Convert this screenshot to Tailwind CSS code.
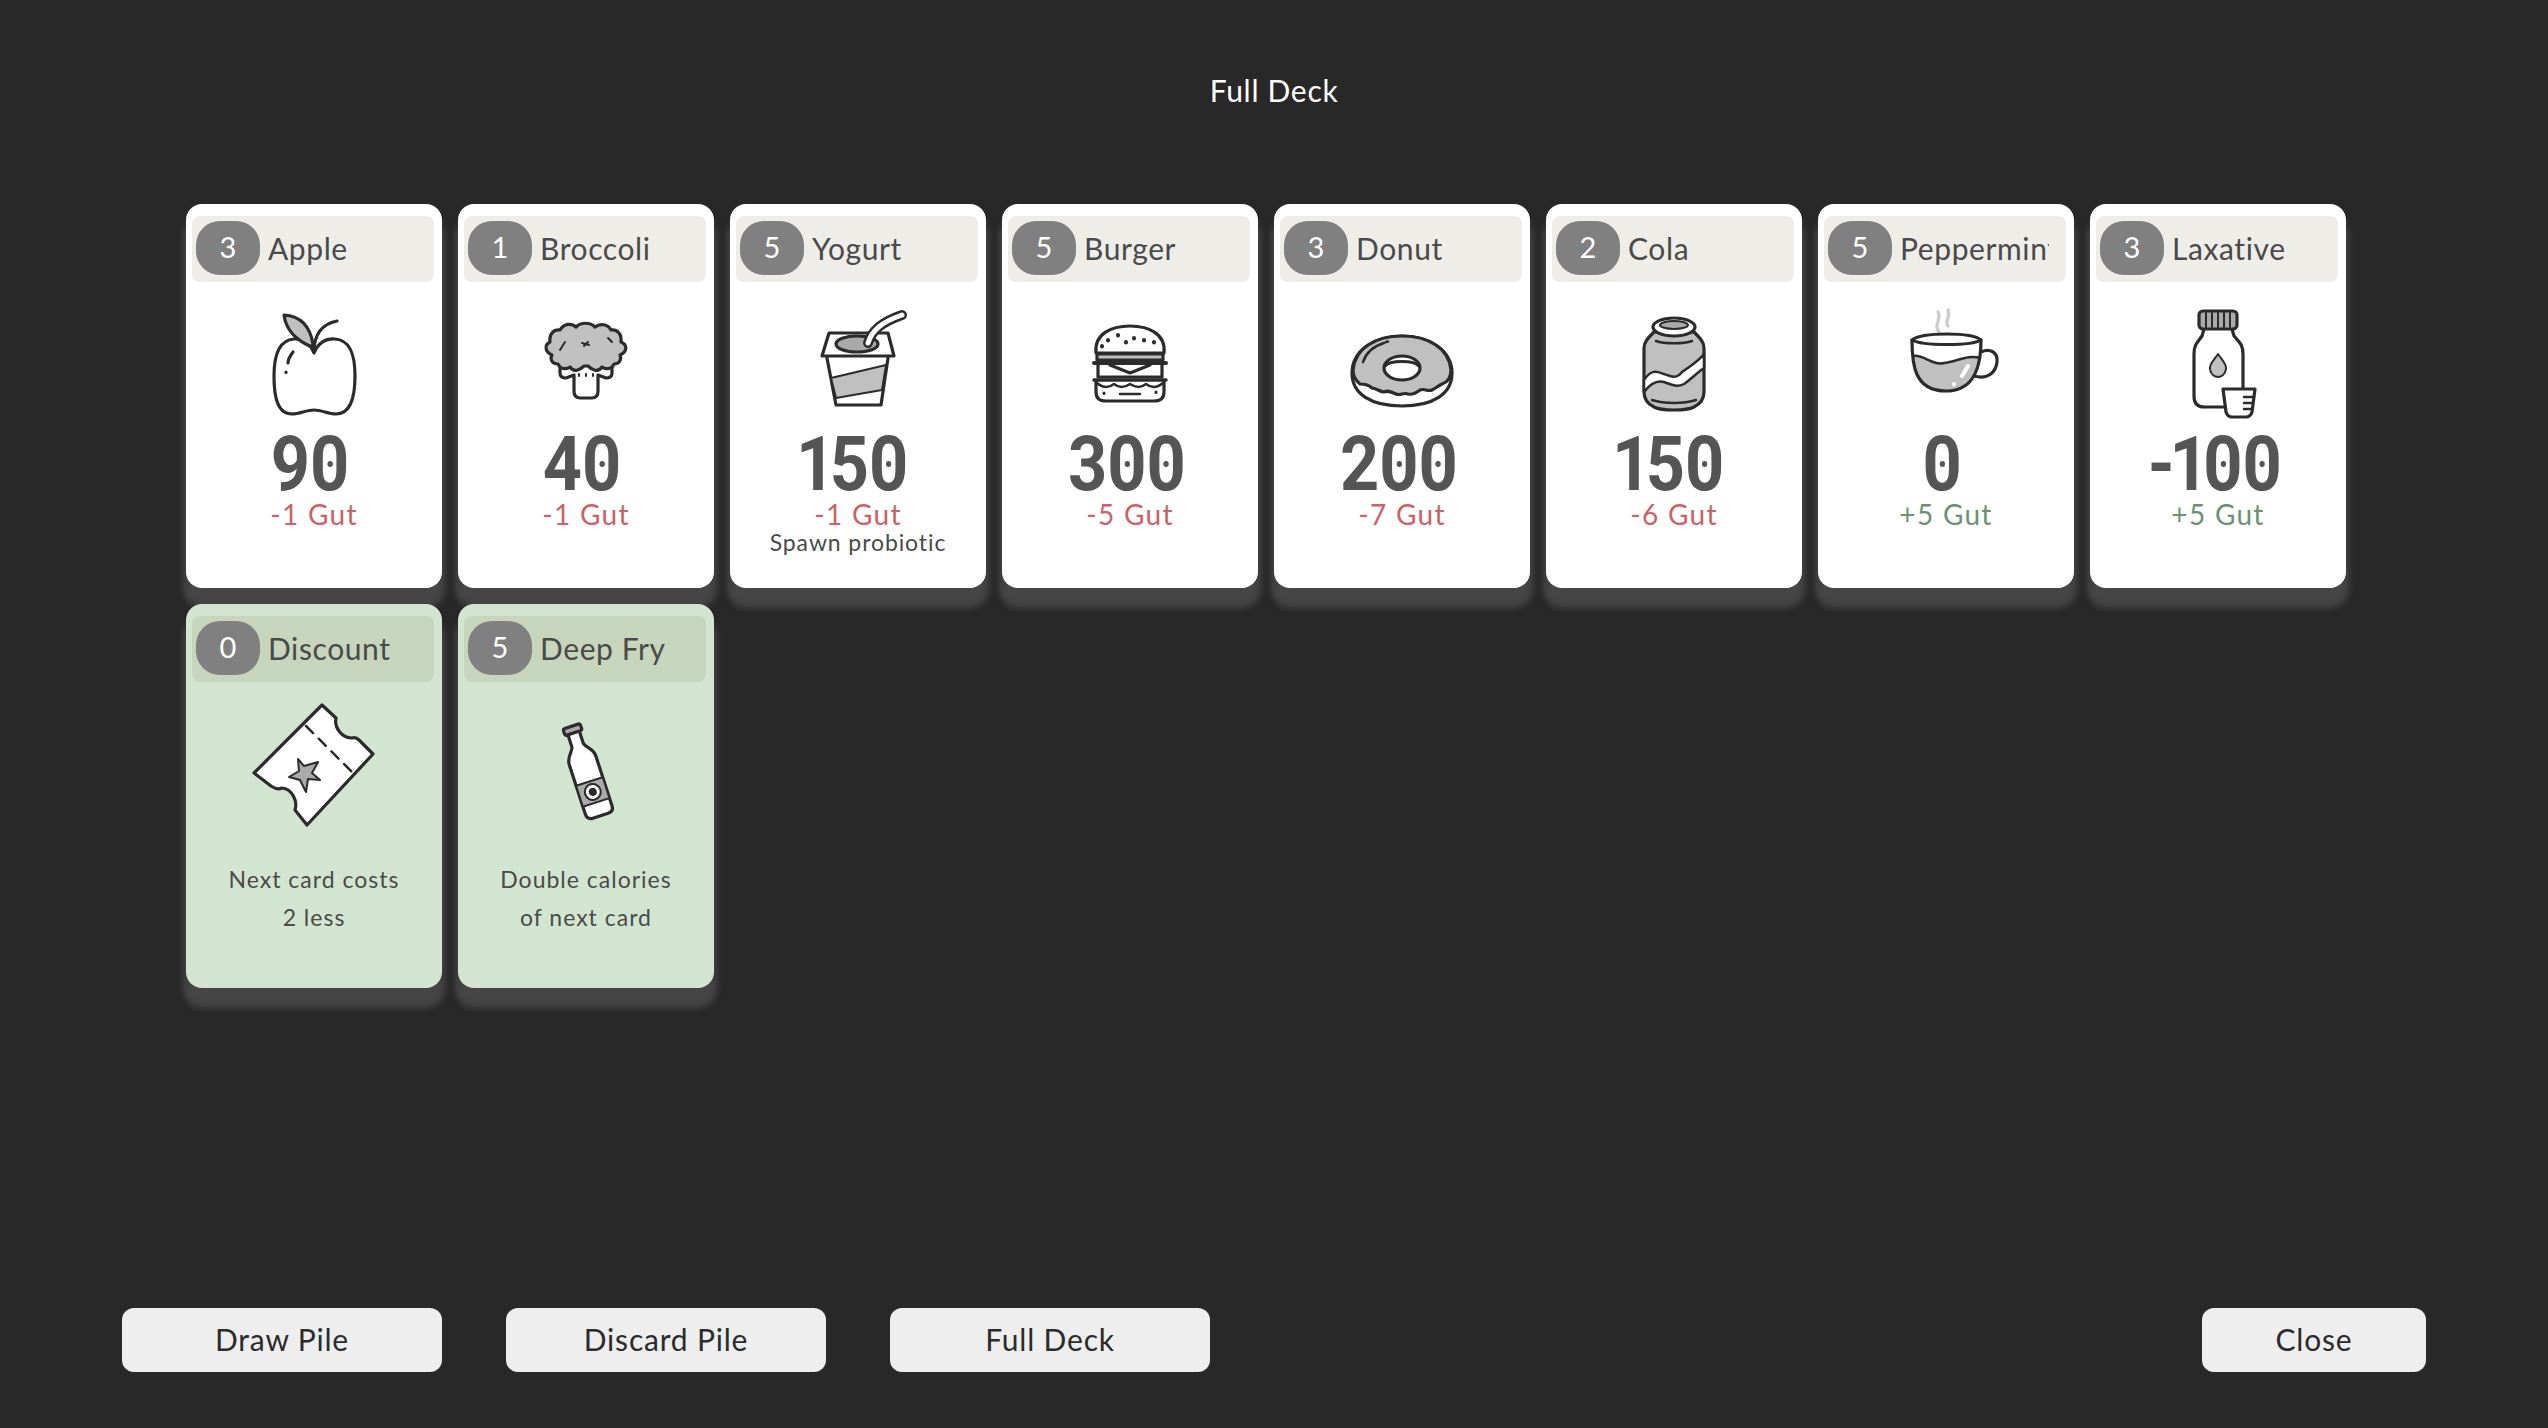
<!DOCTYPE html>
<html lang="en">
<head>
<meta charset="UTF-8" />
<title>Full Deck</title>
<script src="https://cdn.jsdelivr.net/npm/@tailwindcss/browser@4"></script>
</head>
<body class="bg-[#282828] font-['Lato',sans-serif]">
<div class="h-screen flex flex-col">

  <h1 class="h-[204px] pt-[71px] text-center text-[30px] leading-[38px] tracking-[0.7px] font-normal text-white">Full Deck</h1>

  <!-- card grid -->
  <main class="ml-[186px] grid grid-cols-[repeat(8,256px)] auto-rows-[384px] gap-4">

    <!-- Apple -->
    <div class="rounded-2xl bg-white pt-3 shadow-[0_17px_6px_3px_#454545] flex flex-col items-center">
      <div class="ml-1.5 mr-2 self-stretch h-[66px] rounded-lg bg-[#eeede8] flex items-center pl-1 pr-2.5 pb-0.5"><span class="w-16 h-[54px] shrink-0 rounded-3xl bg-[#808080] text-white text-[29px] flex items-center justify-center pb-0.5">3</span><span class="ml-2 text-[30px] tracking-[0.6px] text-[#4a4a4a] overflow-hidden whitespace-nowrap">Apple</span></div>
      <div class="mt-3.5 h-32 w-32"><svg viewBox="0 0 128 128" class="w-32 h-32" fill="none" stroke="#2b2b2b" stroke-width="3.2" stroke-linecap="round" stroke-linejoin="round">
        <path d="M64 57C60 47 52 42 44 43C30 44 24 58 24 80C24 100 27 118 42 118C50 118 56 114 64 114C72 114 78 118 86 118C101 118 105 100 105 80C105 58 100 44 85 43C76 42 68 47 64 57Z"/>
        <path fill="#c0c0c0" d="M62 51C50 46 36 36 34 19C50 20 60 30 63 48Z"/>
        <path d="M64 56C64 38 72 28 87 25M43 56C40 60 38 64 38 67M36 76V76.5"/>
      </svg></div>
      <div class="mt-[5px] pr-2 h-[69px] font-['Roboto',sans-serif] font-bold text-[76px] leading-[70px] text-[#555] scale-x-[0.9]">9<span class="relative inline-block">0<i class="absolute left-[19px] top-[32px] w-1.5 h-1.5 rounded-full bg-[#555]"></i></span></div>
      <div class="text-[28px] leading-[32px] tracking-[1.3px] text-[#cc6166]">-1 Gut</div>
    </div>

    <!-- Broccoli -->
    <div class="rounded-2xl bg-white pt-3 shadow-[0_17px_6px_3px_#454545] flex flex-col items-center">
      <div class="ml-1.5 mr-2 self-stretch h-[66px] rounded-lg bg-[#eeede8] flex items-center pl-1 pr-2.5 pb-0.5"><span class="w-16 h-[54px] shrink-0 rounded-3xl bg-[#808080] text-white text-[29px] flex items-center justify-center pb-0.5">1</span><span class="ml-2 text-[30px] tracking-[0.6px] text-[#4a4a4a] overflow-hidden whitespace-nowrap">Broccoli</span></div>
      <div class="mt-3.5 h-32 w-32"><svg viewBox="0 0 128 128" class="w-32 h-32" fill="none" stroke="#2b2b2b" stroke-width="3.2" stroke-linecap="round" stroke-linejoin="round">
        <path fill="#fff" d="M38 68V77Q38 82 44 82L52 79V95Q52 102 58 102H70Q76 102 76 95V79L84 82Q90 82 90 77V68Z"/>
        <path fill="#c0c0c0" d="M36 68C29 68 28 62 30 59C23 56 22 49 28 46C27 38 32 33 38 34C42 27 50 27 54 31C59 26 68 26 73 31C78 27 86 28 89 34C95 33 100 38 99 46C106 49 105 56 98 59C100 64 97 68 92 68C90 73 84 74 80 71C76 77 70 74 66 70H62C58 74 52 77 48 71C44 74 38 73 36 68Z"/>
        <path stroke-width="2" d="M38 54L43 46M60 47L67 49M62 50L66 46M86 42L90 46M57 78V80M64 78V80M71 78V80"/>
      </svg></div>
      <div class="mt-[5px] pr-2 h-[69px] font-['Roboto',sans-serif] font-bold text-[76px] leading-[70px] text-[#555] scale-x-[0.9]">4<span class="relative inline-block">0<i class="absolute left-[19px] top-[32px] w-1.5 h-1.5 rounded-full bg-[#555]"></i></span></div>
      <div class="text-[28px] leading-[32px] tracking-[1.3px] text-[#cc6166]">-1 Gut</div>
    </div>

    <!-- Yogurt -->
    <div class="rounded-2xl bg-white pt-3 shadow-[0_17px_6px_3px_#454545] flex flex-col items-center">
      <div class="ml-1.5 mr-2 self-stretch h-[66px] rounded-lg bg-[#eeede8] flex items-center pl-1 pr-2.5 pb-0.5"><span class="w-16 h-[54px] shrink-0 rounded-3xl bg-[#808080] text-white text-[29px] flex items-center justify-center pb-0.5">5</span><span class="ml-2 text-[30px] tracking-[0.6px] text-[#4a4a4a] overflow-hidden whitespace-nowrap">Yogurt</span></div>
      <div class="mt-3.5 h-32 w-32"><svg viewBox="0 0 128 128" class="w-32 h-32" fill="none" stroke="#2b2b2b" stroke-width="3.2" stroke-linecap="round" stroke-linejoin="round">
        <path d="M33 62L42 109H87L94 62"/>
        <path fill="#c0c0c0" stroke-width="2" d="M37 82L92 69L88 94L42 102Z"/>
        <path fill="#fff" d="M35 37H94L100 60H28Z"/>
        <ellipse cx="63" cy="48" rx="21" ry="8" fill="#aaa"/>
        <path stroke-width="10" d="M74 47C78 34 88 26 108 19"/>
        <path stroke="#fff" stroke-width="5" d="M74 47C78 34 88 26 108 19"/>
      </svg></div>
      <div class="mt-[5px] pr-2 h-[69px] font-['Roboto',sans-serif] font-bold text-[76px] leading-[70px] text-[#555] scale-x-[0.9]"><span class="inline-block -mx-1.5">1</span>5<span class="relative inline-block">0<i class="absolute left-[19px] top-[32px] w-1.5 h-1.5 rounded-full bg-[#555]"></i></span></div>
      <div class="text-[28px] leading-[32px] tracking-[1.3px] text-[#cc6166]">-1 Gut</div>
      <div class="text-[23px] leading-[24px] tracking-[0.9px] text-[#4a4a4a]">Spawn probiotic</div>
    </div>

    <!-- Burger -->
    <div class="rounded-2xl bg-white pt-3 shadow-[0_17px_6px_3px_#454545] flex flex-col items-center">
      <div class="ml-1.5 mr-2 self-stretch h-[66px] rounded-lg bg-[#eeede8] flex items-center pl-1 pr-2.5 pb-0.5"><span class="w-16 h-[54px] shrink-0 rounded-3xl bg-[#808080] text-white text-[29px] flex items-center justify-center pb-0.5">5</span><span class="ml-2 text-[30px] tracking-[0.6px] text-[#4a4a4a] overflow-hidden whitespace-nowrap">Burger</span></div>
      <div class="mt-3.5 h-32 w-32"><svg viewBox="0 0 128 128" class="w-32 h-32" fill="none" stroke="#2b2b2b" stroke-width="3.2" stroke-linecap="round" stroke-linejoin="round">
        <path d="M30 57C28 38 45 30 64 30C83 30 100 38 98 57Z"/>
        <path stroke-width="4" d="M42 44V44.5M52 39V39.5M60 46V46.5M68 42V42.5M78 44V44.5M88 46V46.5M36 50V50.5"/>
        <path fill="#c0c0c0" d="M31 58H97V64H31Z"/>
        <path stroke-width="4" d="M28 67H100"/>
        <path d="M32 69V81H96V69M44 69L64 77L84 69"/>
        <path stroke-width="3.5" d="M28 84H100"/>
        <path d="M30 85V96Q30 105 40 105H88Q98 105 98 96V85"/>
        <path stroke-width="2.5" d="M31 87C37 92 43 92 48 88C53 92 58 92 64 88C70 92 75 92 80 88C85 92 91 92 97 87M54 98H74"/>
        <path stroke-width="3" d="M38 97V97.5M90 96V96.5"/>
      </svg></div>
      <div class="mt-[5px] pr-2 h-[69px] font-['Roboto',sans-serif] font-bold text-[76px] leading-[70px] text-[#555] scale-x-[0.9]">3<span class="relative inline-block">0<i class="absolute left-[19px] top-[32px] w-1.5 h-1.5 rounded-full bg-[#555]"></i></span><span class="relative inline-block">0<i class="absolute left-[19px] top-[32px] w-1.5 h-1.5 rounded-full bg-[#555]"></i></span></div>
      <div class="text-[28px] leading-[32px] tracking-[1.3px] text-[#cc6166]">-5 Gut</div>
    </div>

    <!-- Donut -->
    <div class="rounded-2xl bg-white pt-3 shadow-[0_17px_6px_3px_#454545] flex flex-col items-center">
      <div class="ml-1.5 mr-2 self-stretch h-[66px] rounded-lg bg-[#eeede8] flex items-center pl-1 pr-2.5 pb-0.5"><span class="w-16 h-[54px] shrink-0 rounded-3xl bg-[#808080] text-white text-[29px] flex items-center justify-center pb-0.5">3</span><span class="ml-2 text-[30px] tracking-[0.6px] text-[#4a4a4a] overflow-hidden whitespace-nowrap">Donut</span></div>
      <div class="mt-3.5 h-32 w-32"><svg viewBox="0 0 128 128" class="w-32 h-32" fill="none" stroke="#2b2b2b" stroke-width="3.2" stroke-linecap="round" stroke-linejoin="round">
        <path d="M14 77C14 55 36 40 64 40C92 40 114 55 114 77C114 98 95 110 64 110C33 110 14 98 14 77Z"/>
        <path fill="#c0c0c0" d="M15 74C17 52 38 40 64 40C90 40 111 52 113 74C113 82 110 86 104 88C100 90 98 92 94 94C90 96 86 92 82 94C78 97 74 99 70 98C66 96 62 100 58 98C54 96 50 94 46 96C42 96 38 92 34 92C30 88 26 88 22 88C17 84 15 80 15 74Z"/>
        <ellipse cx="64" cy="72" rx="18" ry="12" fill="#fff"/>
        <path d="M47 70C52 64 76 64 81 70"/>
        <path stroke-width="2.5" d="M25 66C28 57 36 50 46 47M48 46L50 45.5"/>
      </svg></div>
      <div class="mt-[5px] pr-2 h-[69px] font-['Roboto',sans-serif] font-bold text-[76px] leading-[70px] text-[#555] scale-x-[0.9]">2<span class="relative inline-block">0<i class="absolute left-[19px] top-[32px] w-1.5 h-1.5 rounded-full bg-[#555]"></i></span><span class="relative inline-block">0<i class="absolute left-[19px] top-[32px] w-1.5 h-1.5 rounded-full bg-[#555]"></i></span></div>
      <div class="text-[28px] leading-[32px] tracking-[1.3px] text-[#cc6166]">-7 Gut</div>
    </div>

    <!-- Cola -->
    <div class="rounded-2xl bg-white pt-3 shadow-[0_17px_6px_3px_#454545] flex flex-col items-center">
      <div class="ml-1.5 mr-2 self-stretch h-[66px] rounded-lg bg-[#eeede8] flex items-center pl-1 pr-2.5 pb-0.5"><span class="w-16 h-[54px] shrink-0 rounded-3xl bg-[#808080] text-white text-[29px] flex items-center justify-center pb-0.5">2</span><span class="ml-2 text-[30px] tracking-[0.6px] text-[#4a4a4a] overflow-hidden whitespace-nowrap">Cola</span></div>
      <div class="mt-3.5 h-32 w-32"><svg viewBox="0 0 128 128" class="w-32 h-32" fill="none" stroke="#2b2b2b" stroke-width="3.2" stroke-linecap="round" stroke-linejoin="round">
        <path fill="#c0c0c0" d="M44 36C38 42 34 46 34 52V96C34 103 38 108 44 111C52 115 76 115 84 111C90 108 94 103 94 96V52C94 46 90 42 84 36Z"/>
        <path fill="#fff" stroke-width="2.5" d="M34 84C42 72 48 76 54 78C60 80 66 84 72 76C80 70 88 66 94 58V72C88 76 80 84 74 88C66 92 60 88 54 86C46 84 40 88 34 96Z"/>
        <ellipse cx="64" cy="31" rx="21" ry="9" fill="#fff"/>
        <ellipse cx="64" cy="29" rx="14" ry="4" fill="#aaa" stroke-width="2"/>
        <path stroke-width="2.5" d="M46 45C54 48 74 48 82 45M42 104C54 108 74 108 86 104"/>
      </svg></div>
      <div class="mt-[5px] pr-2 h-[69px] font-['Roboto',sans-serif] font-bold text-[76px] leading-[70px] text-[#555] scale-x-[0.9]"><span class="inline-block -mx-1.5">1</span>5<span class="relative inline-block">0<i class="absolute left-[19px] top-[32px] w-1.5 h-1.5 rounded-full bg-[#555]"></i></span></div>
      <div class="text-[28px] leading-[32px] tracking-[1.3px] text-[#cc6166]">-6 Gut</div>
    </div>

    <!-- Peppermint -->
    <div class="rounded-2xl bg-white pt-3 shadow-[0_17px_6px_3px_#454545] flex flex-col items-center">
      <div class="ml-1.5 mr-2 self-stretch h-[66px] rounded-lg bg-[#eeede8] flex items-center pl-1 pr-[17px] pb-0.5"><span class="w-16 h-[54px] shrink-0 rounded-3xl bg-[#808080] text-white text-[29px] flex items-center justify-center pb-0.5">5</span><span class="ml-2 text-[30px] tracking-[0.6px] text-[#4a4a4a] overflow-hidden whitespace-nowrap">Peppermint</span></div>
      <div class="mt-3.5 h-32 w-32"><svg viewBox="0 0 128 128" class="w-32 h-32" fill="none" stroke="#2b2b2b" stroke-width="3.2" stroke-linecap="round" stroke-linejoin="round">
        <path stroke="#ccc" d="M57 36C51 28 60 24 56 16M66 30C62 25 69 22 66 14"/>
        <path fill="#c0c0c0" stroke="none" d="M31 60C42 58 50 70 62 67C74 66 86 58 98 62C96 78 88 94 64 95C40 95 33 78 31 60Z"/>
        <path stroke="#fff" stroke-width="4" d="M80 80L86 70M72 88V88.5"/>
        <path d="M30 44C30 68 32 95 64 95C94 95 99 68 99 44"/>
        <path d="M30 44C40 36 90 36 99 44C90 50 40 50 30 44Z"/>
        <path stroke-width="2.5" d="M31 60C42 58 50 70 62 67C74 66 86 58 98 62"/>
        <path d="M99 56C108 52 116 56 115 66C114 76 106 84 92 80"/>
      </svg></div>
      <div class="mt-[5px] pr-2 h-[69px] font-['Roboto',sans-serif] font-bold text-[76px] leading-[70px] text-[#555] scale-x-[0.9]"><span class="relative inline-block">0<i class="absolute left-[19px] top-[32px] w-1.5 h-1.5 rounded-full bg-[#555]"></i></span></div>
      <div class="text-[28px] leading-[32px] tracking-[1.3px] text-[#6f9070]">+5 Gut</div>
    </div>

    <!-- Laxative -->
    <div class="rounded-2xl bg-white pt-3 shadow-[0_17px_6px_3px_#454545] flex flex-col items-center">
      <div class="ml-1.5 mr-2 self-stretch h-[66px] rounded-lg bg-[#eeede8] flex items-center pl-1 pr-2.5 pb-0.5"><span class="w-16 h-[54px] shrink-0 rounded-3xl bg-[#808080] text-white text-[29px] flex items-center justify-center pb-0.5">3</span><span class="ml-2 text-[30px] tracking-[0.6px] text-[#4a4a4a] overflow-hidden whitespace-nowrap">Laxative</span></div>
      <div class="mt-3.5 h-32 w-32"><svg viewBox="0 0 128 128" class="w-32 h-32" fill="none" stroke="#2b2b2b" stroke-width="3.2" stroke-linecap="round" stroke-linejoin="round">
        <path d="M50 33L48 40C44 46 40 48 40 58V100C40 108 44 111 50 111H72M78 33L80 40C85 46 89 48 89 58V92"/>
        <rect x="45" y="15" width="38" height="18" rx="4" fill="#aaa"/>
        <path stroke-width="2" d="M52 17V31M58 17V31M64 17V31M70 17V31M76 17V31"/>
        <path fill="#c0c0c0" stroke-width="2" d="M64 58C60 64 55 68 56 73C57 79 61 81 64 81C67 81 71 79 72 73C73 68 68 64 64 58Z"/>
        <path fill="#fff" d="M69 93H101L98 116C97 119 95 121 92 121H78C75 121 73 119 72 116Z"/>
        <path stroke-width="2.5" d="M90 101H99M90 107H98M90 113H97"/>
      </svg></div>
      <div class="mt-[5px] pr-2 h-[69px] font-['Roboto',sans-serif] font-bold text-[76px] leading-[70px] text-[#555] scale-x-[0.9]">-<span class="inline-block -mx-1.5">1</span><span class="relative inline-block">0<i class="absolute left-[19px] top-[32px] w-1.5 h-1.5 rounded-full bg-[#555]"></i></span><span class="relative inline-block">0<i class="absolute left-[19px] top-[32px] w-1.5 h-1.5 rounded-full bg-[#555]"></i></span></div>
      <div class="text-[28px] leading-[32px] tracking-[1.3px] text-[#6f9070]">+5 Gut</div>
    </div>

    <!-- Discount -->
    <div class="rounded-2xl bg-[#d2e5d0] pt-3 shadow-[0_17px_6px_3px_#454545] flex flex-col items-center">
      <div class="ml-1.5 mr-2 self-stretch h-[66px] rounded-lg bg-[#c6d5bb] flex items-center pl-1 pr-2.5 pb-0.5"><span class="w-16 h-[54px] shrink-0 rounded-3xl bg-[#808080] text-white text-[29px] flex items-center justify-center pb-0.5">0</span><span class="ml-2 text-[30px] tracking-[0.6px] text-[#4a4a4a] overflow-hidden whitespace-nowrap">Discount</span></div>
      <div class="mt-3.5 h-32 w-32"><svg viewBox="0 0 128 128" class="w-32 h-32 overflow-visible" fill="none" stroke="#2b2b2b" stroke-width="3.2" stroke-linecap="round" stroke-linejoin="round">
        <path fill="#fff" d="M72 9L86 22C84 32 92 42 102 42C105 41 107 42 109 44L123 58L57 129L45 114C48 105 42 93 32 92C28 94 24 92 21 90L4 77Z"/>
        <path stroke-width="2.5" stroke-dasharray="10 8" d="M56 30L102 76"/>
        <path fill="#aaa" stroke-width="2" d="M48 63L54 70L68 66L62 77L70 84L58 83L56 96L50 84L39 81L49 75Z"/>
      </svg></div>
      <div class="mt-9 text-center text-[23px] leading-[38px] tracking-[1px] text-[#4a4a4a]">Next card costs<br>2 less</div>
    </div>

    <!-- Deep Fry -->
    <div class="rounded-2xl bg-[#d2e5d0] pt-3 shadow-[0_17px_6px_3px_#454545] flex flex-col items-center">
      <div class="ml-1.5 mr-2 self-stretch h-[66px] rounded-lg bg-[#c6d5bb] flex items-center pl-1 pr-2.5 pb-0.5"><span class="w-16 h-[54px] shrink-0 rounded-3xl bg-[#808080] text-white text-[29px] flex items-center justify-center pb-0.5">5</span><span class="ml-2 text-[30px] tracking-[0.6px] text-[#4a4a4a] overflow-hidden whitespace-nowrap">Deep Fry</span></div>
      <div class="mt-3.5 h-32 w-32"><svg viewBox="0 0 128 128" class="w-32 h-32" fill="none" stroke="#2b2b2b" stroke-width="3.2" stroke-linecap="round" stroke-linejoin="round">
        <g transform="rotate(-18 64 75)">
          <path fill="#fff" d="M58 34V48C56 54 50 56 50 64V116C50 120 52 122 56 122H72C76 122 78 120 78 116V64C78 56 72 54 70 48V34Z"/>
          <rect x="55" y="28" width="18" height="7" rx="2" fill="#aaa"/>
          <rect x="50" y="86" width="28" height="22" fill="#aaa" stroke-width="2"/>
          <circle cx="64" cy="97" r="8" fill="#fff" stroke-width="2"/>
          <circle cx="64" cy="97" r="4" fill="#2b2b2b" stroke="none"/>
        </g>
      </svg></div>
      <div class="mt-9 text-center text-[23px] leading-[38px] tracking-[1px] text-[#4a4a4a]">Double calories<br>of next card</div>
    </div>
  </main>

  <!-- pile buttons -->
  <footer class="mt-auto px-[122px] pb-14 flex justify-between">
    <div class="flex gap-16">
      <button class="w-80 h-16 rounded-xl bg-[#eeeeee] pb-0.5 text-[30px] tracking-[0.8px] text-[#2b2b2b]">Draw Pile</button>
      <button class="w-80 h-16 rounded-xl bg-[#eeeeee] pb-0.5 text-[30px] tracking-[0.8px] text-[#2b2b2b]">Discard Pile</button>
      <button class="w-80 h-16 rounded-xl bg-[#eeeeee] pb-0.5 text-[30px] tracking-[0.8px] text-[#2b2b2b]">Full Deck</button>
    </div>
    <button class="w-56 h-16 rounded-xl bg-[#eeeeee] pb-0.5 text-[30px] tracking-[0.8px] text-[#2b2b2b]">Close</button>
  </footer>
</div>
</body>
</html>
